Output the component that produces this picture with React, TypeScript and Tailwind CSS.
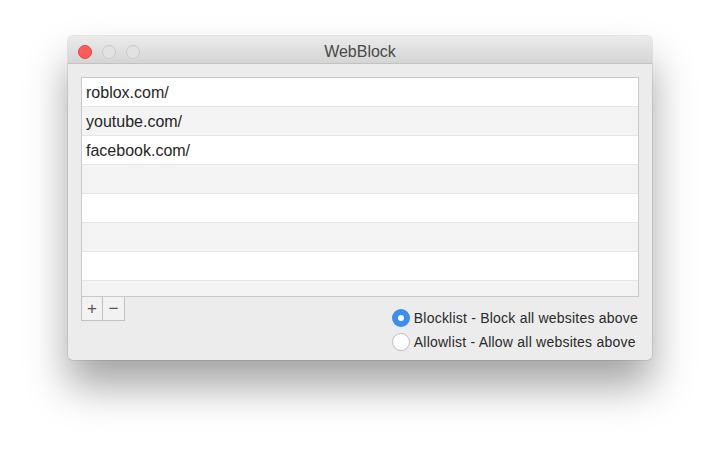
import React from "react";

const rows = ["roblox.com/", "youtube.com/", "facebook.com/", "", "", "", "", ""];

export default function App() {
  return (
    <div
      className="w-[720px] h-[457px] bg-white overflow-hidden pt-[36px] pl-[68px]"
      style={{ fontFamily: '"Liberation Sans", Arial, sans-serif' }}
    >
      <div className="w-[584px] h-[324px] rounded-[5px] bg-[#ececec] flex flex-col shadow-[0_26px_42px_rgba(0,0,0,0.36),0_0_0_1px_rgba(0,0,0,0.08)]">
        {/* Title bar */}
        <div className="relative h-[28px] flex items-center pt-[4px] pl-[10px] gap-[10px] rounded-t-[5px] bg-gradient-to-b from-[#ebebeb] to-[#d5d5d5] border-b border-[#c2c2c2]">
          <div className="w-[14px] h-[14px] rounded-full bg-[#fc5d57] border border-[#e0443e]" />
          <div className="w-[14px] h-[14px] rounded-full bg-[#e2e2e2] border border-[#cacaca]" />
          <div className="w-[14px] h-[14px] rounded-full bg-[#e2e2e2] border border-[#cacaca]" />
          <div className="absolute inset-0 pt-[4px] flex items-center justify-center text-[16px] text-[#4a4a4a] pointer-events-none">
            WebBlock
          </div>
        </div>
        {/* Body */}
        <div className="flex-1 flex flex-col px-[13px] pt-[13px]">
          <div className="h-[220px] border border-[#c9c9c9] bg-white overflow-hidden flex flex-col">
            {rows.map((r, i) => (
              <div
                key={i}
                className={
                  "h-[29px] shrink-0 flex items-center pl-[4px] pt-[2px] text-[16px] text-[#262626] border-b border-[#e6e6e6] " +
                  (i % 2 === 1 ? "bg-[#f4f4f4]" : "bg-white")
                }
              >
                {r}
              </div>
            ))}
          </div>
          <div className="flex justify-between items-start">
            <div className="flex h-[24px] border border-t-0 border-[#c2c2c2] bg-[#f2f2f2] text-[#555]">
              <div className="w-[21px] flex items-center justify-center border-r border-[#c2c2c2] text-[17px] leading-none">+</div>
              <div className="w-[21px] flex items-center justify-center text-[17px] leading-none">−</div>
            </div>
            <div className="flex flex-col pt-[9px] text-[14px] tracking-[0.22px] text-[#2a2a2a] pr-[1px]">
              <div className="h-[24px] flex items-center gap-[4px]">
                <div className="w-[18px] h-[18px] rounded-full bg-[#3a8ff0] flex items-center justify-center">
                  <div className="w-[6px] h-[6px] rounded-full bg-white" />
                </div>
                <span>Blocklist - Block all websites above</span>
              </div>
              <div className="h-[24px] flex items-center gap-[4px]">
                <div className="w-[18px] h-[18px] rounded-full bg-white border border-[#c4bcc4]" />
                <span>Allowlist - Allow all websites above</span>
              </div>
            </div>
          </div>
        </div>
      </div>
    </div>
  );
}
